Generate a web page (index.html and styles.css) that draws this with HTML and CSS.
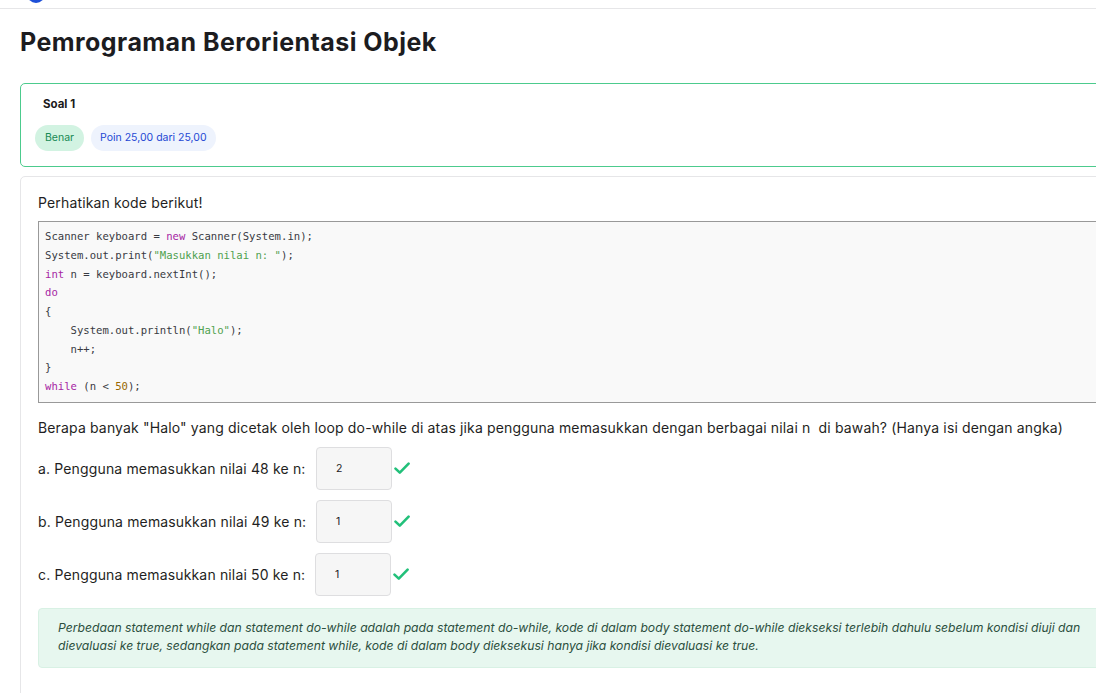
FILE: index.html
```html
<!DOCTYPE html>
<html lang="id">
<head>
<meta charset="utf-8">
<title>Pemrograman Berorientasi Objek</title>
<link rel="stylesheet" href="styles.css">
</head>
<body>
<header class="topbar"><div class="logo"></div></header>
<main class="page">
  <h1 class="title">Pemrograman Berorientasi Objek</h1>
  <section class="card card-status">
    <div class="soal">Soal 1</div>
    <div class="badges">
      <span class="badge badge-ok">Benar</span>
      <span class="badge badge-point">Poin 25,00 dari 25,00</span>
    </div>
  </section>
  <section class="card card-question">
    <p class="text">Perhatikan kode berikut!</p>
<pre class="code"><code>Scanner keyboard = <span class="kw">new</span> Scanner(System.in);
System.out.print(<span class="str">"Masukkan nilai n: "</span>);
<span class="kw">int</span> n = keyboard.nextInt();
<span class="kw">do</span>
{
    System.out.println(<span class="str">"Halo"</span>);
    n++;
}
<span class="kw">while</span> (n &lt; <span class="num">50</span>);</code></pre>
    <p class="text question">Berapa banyak "Halo" yang dicetak oleh loop do-while di atas jika pengguna memasukkan dengan berbagai nilai n&nbsp; di bawah? (Hanya isi dengan angka)</p>
    <div class="answers">
      <div class="row">
        <span class="label">a. Pengguna memasukkan nilai 48 ke n:</span>
        <span class="input">2</span>
        <svg class="check" viewBox="0 0 16 16" width="16" height="16"><path d="M1.5 8.6 L5.8 12.6 L14.6 3.6" fill="none" stroke="#22c07a" stroke-width="2.6" stroke-linecap="round" stroke-linejoin="round"/></svg>
      </div>
      <div class="row">
        <span class="label">b. Pengguna memasukkan nilai 49 ke n:</span>
        <span class="input">1</span>
        <svg class="check" viewBox="0 0 16 16" width="16" height="16"><path d="M1.5 8.6 L5.8 12.6 L14.6 3.6" fill="none" stroke="#22c07a" stroke-width="2.6" stroke-linecap="round" stroke-linejoin="round"/></svg>
      </div>
      <div class="row">
        <span class="label label-c">c. Pengguna memasukkan nilai 50 ke n:</span>
        <span class="input">1</span>
        <svg class="check" viewBox="0 0 16 16" width="16" height="16"><path d="M1.5 8.6 L5.8 12.6 L14.6 3.6" fill="none" stroke="#22c07a" stroke-width="2.6" stroke-linecap="round" stroke-linejoin="round"/></svg>
      </div>
    </div>
    <div class="feedback"><span class="fb-line">Perbedaan statement while dan statement do-while adalah pada statement do-while, kode di dalam body statement do-while diekseksi terlebih dahulu sebelum kondisi diuji dan</span><span class="fb-line">dievaluasi ke true, sedangkan pada statement while, kode di dalam body dieksekusi hanya jika kondisi dievaluasi ke true.</span></div>
  </section>
</main>
</body>
</html>
```

FILE: styles.css
```css
html, body {
  margin: 0;
  padding: 0;
  background: #ffffff;
  overflow: hidden;
}
body {
  font-family: Inter, "Noto Sans", sans-serif;
  color: #1f1f23;
  width: 1096px;
  height: 693px;
}
.topbar {
  display: flow-root;
  height: 8px;
  border-bottom: 1px solid #e6e6e8;
}
.logo {
  width: 18px;
  height: 18px;
  border-radius: 50%;
  background: #1d4fd8;
  margin-left: 27px;
  margin-top: -15px;
}
.page {
  width: 1220px;
  padding: 0 20px;
}
.title {
  margin: 17px 0 25px;
  font-size: 25px;
  line-height: 32px;
  font-weight: 700;
  letter-spacing: 0.45px;
  color: #1c1c1f;
}
.card {
  border: 1px solid #e6e6e8;
  border-radius: 5px;
  background: #fff;
}
.card-status {
  border-color: #4ccb8d;
  padding: 11px 14px 15px;
  display: flex;
  flex-direction: column;
  gap: 12px;
}
.soal {
  font-size: 11.5px;
  line-height: 18px;
  font-weight: 700;
  padding-left: 8px;
  color: #1a1a1a;
}
.badges {
  display: flex;
  gap: 7px;
}
.badge {
  height: 26px;
  line-height: 26px;
  padding: 0 10px;
  border-radius: 13px;
  font-size: 10.5px;
}
.badge-ok {
  background: #d2f3e2;
  color: #178a55;
}
.badge-point {
  background: #eef3fd;
  color: #2448d4;
  padding: 0 9px;
}
.card-question {
  margin-top: 9px;
  padding: 16px 17px 60px;
}
.text {
  margin: 0;
  font-size: 14px;
  line-height: 20px;
  letter-spacing: 0.15px;
  color: #1f1f23;
}
.code {
  margin: 8px 0 0;
  padding: 5px 6px 6px;
  border: 1px solid #999999;
  background: #f9f9f9;
  font-family: "DejaVu Sans Mono", "Liberation Mono", monospace;
  font-size: 10.6px;
  line-height: 18.75px;
  color: #383a42;
}
.kw { color: #a626a4; }
.str { color: #4fa14f; }
.num { color: #986801; }
.question {
  margin-top: 15px;
}
.answers {
  margin-top: 9px;
  display: flex;
  flex-direction: column;
  gap: 10px;
}
.row {
  display: flex;
  align-items: center;
  height: 43px;
}
.label {
  font-size: 14px;
  letter-spacing: 0.15px;
  color: #1f1f23;
  width: 278px;
  flex: none;
}
.label-c {
  width: 277px;
}
.input {
  box-sizing: border-box;
  width: 76px;
  height: 43px;
  line-height: 41px;
  border: 1px solid #dedee0;
  border-radius: 4px;
  background: #f6f6f6;
  padding-left: 19px;
  font-size: 10.5px;
  color: #222;
}
.check {
  margin-left: 2px;
}
.feedback {
  margin-top: 12px;
  background: #e7f7ef;
  border: 1px solid #d8f1e4;
  border-radius: 4px;
  padding: 10px 19px 12px;
  font-size: 12.2px;
  line-height: 18px;
  letter-spacing: 0;
  font-style: italic;
  color: #2c4f3e;
}
.fb-line {
  display: block;
  white-space: nowrap;
}
```
